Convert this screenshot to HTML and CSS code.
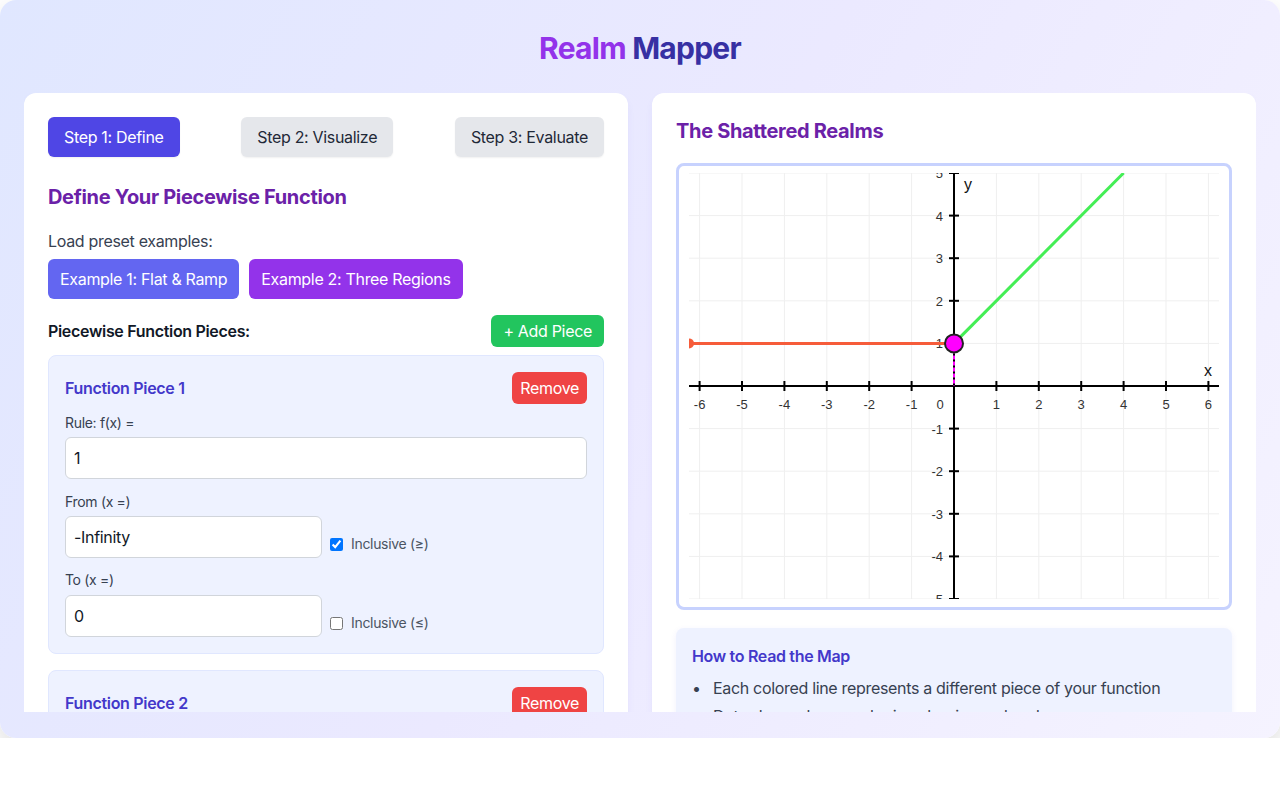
FILE: index.html
```html
<!DOCTYPE html>
<html lang="en">
<head>
    <meta charset="UTF-8">
    <meta name="viewport" content="width=device-width, initial-scale=1.0">
    <title>Realm Mapper</title>
    <link rel="stylesheet" href="styles.css">
</head>
<body>
    <div class="app-frame">
        <h1 class="title"><span class="title-realm">Realm</span> <span class="title-mapper">Mapper</span></h1>
        <div class="panels">
            <section class="card">
                <div class="steps">
                    <button class="step active">Step 1: Define</button>
                    <button class="step">Step 2: Visualize</button>
                    <button class="step">Step 3: Evaluate</button>
                </div>
                <h2 class="card-title">Define Your Piecewise Function</h2>
                <p class="hint">Load preset examples:</p>
                <div class="presets">
                    <button class="btn btn-indigo">Example 1: Flat &amp; Ramp</button>
                    <button class="btn btn-purple">Example 2: Three Regions</button>
                </div>
                <div class="pieces-header">
                    <h3>Piecewise Function Pieces:</h3>
                    <button class="btn btn-green btn-small">+ Add Piece</button>
                </div>
                <div class="piece">
                    <div class="piece-head">
                        <h4>Function Piece 1</h4>
                        <button class="btn btn-red btn-small">Remove</button>
                    </div>
                    <label class="field-label">Rule: f(x) =</label>
                    <input class="field" type="text" value="1">
                    <label class="field-label">From (x =)</label>
                    <div class="bound">
                        <input class="field" type="text" value="-Infinity">
                        <label class="inclusive"><input type="checkbox" checked> Inclusive (&ge;)</label>
                    </div>
                    <label class="field-label">To (x =)</label>
                    <div class="bound">
                        <input class="field" type="text" value="0">
                        <label class="inclusive"><input type="checkbox"> Inclusive (&le;)</label>
                    </div>
                </div>
                <div class="piece">
                    <div class="piece-head">
                        <h4>Function Piece 2</h4>
                        <button class="btn btn-red btn-small">Remove</button>
                    </div>
                    <label class="field-label">Rule: f(x) =</label>
                    <input class="field" type="text" value="x + 1">
                    <label class="field-label">From (x =)</label>
                    <div class="bound">
                        <input class="field" type="text" value="0">
                        <label class="inclusive"><input type="checkbox"> Inclusive (&ge;)</label>
                    </div>
                    <label class="field-label">To (x =)</label>
                    <div class="bound">
                        <input class="field" type="text" value="Infinity">
                        <label class="inclusive"><input type="checkbox"> Inclusive (&le;)</label>
                    </div>
                </div>
            </section>

            <section class="card">
                <h2 class="card-title">The Shattered Realms</h2>
                <div class="graph-box">
                    <svg id="realm-graph" width="530" height="426"></svg>
                </div>
                <div class="legend">
                    <h4>How to Read the Map</h4>
                    <ul>
                        <li>Each colored line represents a different piece of your function</li>
                        <li>Dots show where each piece begins and ends</li>
                        <li>Filled dots are included, hollow dots are not</li>
                    </ul>
                </div>
            </section>
        </div>
    </div>

    <script>
        const svg = document.getElementById("realm-graph")
        const NS = "http://www.w3.org/2000/svg"

        // origin sits in the middle, 42.4px per unit on x, 42.6px on y
        const OX = 265, OY = 213, UX = 42.4, UY = 42.6
        const W = 530, H = 426

        function px(x) { return OX + x * UX }
        function py(y) { return OY - y * UY }

        function add(tag, attrs, text) {
            const el = document.createElementNS(NS, tag)
            for (const k in attrs) el.setAttribute(k, attrs[k])
            if (text !== undefined) el.textContent = text
            svg.appendChild(el)
            return el
        }

        // grid
        for (let i = -6; i <= 6; i++) {
            add("line", { x1: px(i), y1: 0, x2: px(i), y2: H, class: "grid" })
        }
        for (let j = -5; j <= 5; j++) {
            add("line", { x1: 0, y1: py(j), x2: W, y2: py(j), class: "grid" })
        }

        // axes
        add("line", { x1: 0, y1: OY, x2: W, y2: OY, class: "axis" })
        add("line", { x1: OX, y1: 0, x2: OX, y2: H, class: "axis" })

        for (let i = -6; i <= 6; i++) {
            if (i == 0) continue
            add("line", { x1: px(i), y1: OY - 5, x2: px(i), y2: OY + 5, class: "axis" })
            add("text", { x: px(i), y: OY + 23, class: "tick", "text-anchor": "middle" }, i)
        }
        for (let j = -5; j <= 5; j++) {
            if (j == 0) continue
            add("line", { x1: OX - 5, y1: py(j), x2: OX + 5, y2: py(j), class: "axis" })
            add("text", { x: OX - 11, y: py(j) + 5, class: "tick", "text-anchor": "end" }, j)
        }
        add("text", { x: OX - 14, y: OY + 23, class: "tick", "text-anchor": "middle" }, "0")
        add("text", { x: W - 11, y: OY - 10, class: "axis-name", "text-anchor": "middle" }, "x")
        add("text", { x: OX + 14, y: 17, class: "axis-name", "text-anchor": "middle" }, "y")

        // piece 1: f(x) = 1 on (-inf, 0)
        add("line", { x1: 0, y1: py(1), x2: px(0), y2: py(1), stroke: "#f65c3a", class: "piece-line" })
        add("circle", { cx: 0, cy: py(1), r: 5, fill: "#f65c3a" })

        // piece 2: f(x) = x + 1 on (0, inf)
        add("line", { x1: px(0), y1: py(1), x2: px(4), y2: py(5), stroke: "#44ee55", class: "piece-line" })

        // boundary marker at x = 0
        add("line", { x1: px(0), y1: py(1), x2: px(0), y2: py(0), class: "boundary" })
        add("circle", { cx: px(0), cy: py(1), r: 9, class: "boundary-dot" })
    </script>
</body>
</html>
```

FILE: styles.css
```css
* {
    box-sizing: border-box;
}
body {
    margin: 0;
    background-color: #ffffff;
    font-family: Inter, "Noto Sans", sans-serif;
    letter-spacing: -0.02em;
    color: #111827;
}
.app-frame {
    height: 738px;
    display: flex;
    flex-direction: column;
    padding: 30px 24px 26px;
    border-radius: 16px;
    background: linear-gradient(120deg, #e0e7ff 0%, #ebe9ff 50%, #f5f3ff 100%);
    box-shadow: 0 12px 30px rgba(0, 0, 0, 0.14);
}
.title {
    margin: 0 0 27px;
    text-align: center;
    font-size: 30px;
    line-height: 36px;
    font-weight: 700;
    letter-spacing: -0.025em;
}
.title-realm {
    color: #9333ea;
}
.title-mapper {
    color: #3730a3;
}
.panels {
    flex: 1;
    min-height: 0;
    overflow: hidden;
    display: grid;
    grid-template-columns: 1fr 1fr;
    gap: 24px;
    align-items: start;
}
.card {
    background-color: #ffffff;
    border-radius: 12px;
    padding: 24px;
    box-shadow: 0 4px 10px -2px rgba(79, 70, 229, 0.08);
}

/* step tabs */
.steps {
    display: flex;
    justify-content: space-between;
    margin-bottom: 26px;
}
.step {
    font-family: inherit;
    letter-spacing: inherit;
    font-size: 16px;
    line-height: 24px;
    padding: 8px 16px;
    border: none;
    border-radius: 6px;
    background-color: #e5e7eb;
    color: #1f2937;
    box-shadow: 0 1px 2px rgba(0, 0, 0, 0.06);
}
.step.active {
    background-color: #4f46e5;
    color: #ffffff;
}

.card-title {
    margin: 0 0 18px;
    font-size: 20px;
    line-height: 28px;
    font-weight: 700;
    color: #6b21a8;
}
.hint {
    margin: 0 0 6px;
    font-size: 16px;
    line-height: 24px;
    color: #374151;
}

.btn {
    font-family: inherit;
    letter-spacing: inherit;
    font-size: 16px;
    line-height: 24px;
    padding: 8px 12px;
    border: none;
    border-radius: 6px;
    color: #ffffff;
}
.btn-small {
    padding: 4px 12px;
}
.btn-indigo { background-color: #6366f1; }
.btn-purple { background-color: #9333ea; }
.btn-green { background-color: #22c55e; }
.btn-red { background-color: #ef4444; padding: 4px 8px; }

.presets {
    display: flex;
    gap: 10px;
    margin-bottom: 16px;
}
.pieces-header {
    display: flex;
    justify-content: space-between;
    align-items: center;
    margin-bottom: 8px;
}
.pieces-header h3 {
    margin: 0;
    font-size: 16px;
    font-weight: 600;
    color: #111827;
}

/* one card per function piece */
.piece {
    background-color: #eef2ff;
    border: 1px solid #e0e7ff;
    border-radius: 8px;
    padding: 16px;
    margin-bottom: 16px;
}
.piece-head {
    display: flex;
    justify-content: space-between;
    align-items: center;
    margin-bottom: 9px;
}
.piece-head h4 {
    margin: 0;
    font-size: 16px;
    font-weight: 600;
    color: #4338ca;
}
.field-label {
    display: block;
    font-size: 14px;
    line-height: 20px;
    color: #374151;
    margin-bottom: 4px;
}
.field {
    display: block;
    width: 100%;
    padding: 8px;
    border: 1px solid #d1d5db;
    border-radius: 6px;
    font-family: inherit;
    letter-spacing: inherit;
    font-size: 16px;
    line-height: 24px;
    color: #111827;
    background-color: #ffffff;
    margin-bottom: 13px;
}
.bound {
    display: flex;
    align-items: flex-end;
    gap: 8px;
    margin-bottom: 12px;
}
.bound + .field-label {
    margin-bottom: 5px;
}
.bound:last-child {
    margin-bottom: 0;
}
.bound .field {
    width: 257px;
    margin-bottom: 0;
}
.inclusive {
    display: flex;
    align-items: center;
    gap: 8px;
    font-size: 14px;
    line-height: 20px;
    color: #4b5563;
    padding-bottom: 4px;
}
.inclusive input {
    margin: 0;
    width: 13px;
    height: 13px;
}

/* graph */
.graph-box {
    border: 3px solid #c7d2fe;
    border-radius: 8px;
    padding: 7px 10px 8px;
    background-color: #ffffff;
    margin-top: 1px;
    margin-bottom: 18px;
}
#realm-graph {
    display: block;
    letter-spacing: 0;
}
#realm-graph .grid {
    stroke: #efefef;
    stroke-width: 1;
}
#realm-graph .axis {
    stroke: #000000;
    stroke-width: 2;
}
#realm-graph .tick {
    font-family: "Liberation Sans", Arial, sans-serif;
    font-size: 13px;
    fill: #333333;
}
#realm-graph .axis-name {
    font-family: "Liberation Sans", Arial, sans-serif;
    font-size: 16px;
    fill: #111111;
}
#realm-graph .piece-line {
    stroke-width: 3;
}
#realm-graph .boundary {
    stroke: #ff00ff;
    stroke-width: 2;
    stroke-dasharray: 4 2;
}
#realm-graph .boundary-dot {
    fill: #ff00ff;
    stroke: #222222;
    stroke-width: 2;
}

.legend {
    background-color: #eef2ff;
    border-radius: 8px;
    padding: 16px;
    box-shadow: 0 2px 6px rgba(79, 70, 229, 0.08);
}
.legend h4 {
    margin: 0 0 8px;
    font-size: 16px;
    line-height: 24px;
    font-weight: 600;
    color: #4338ca;
}
.legend ul {
    margin: 0;
    padding-left: 21px;
    list-style: none;
    font-size: 16px;
    line-height: 24px;
    color: #374151;
}
.legend li {
    margin-bottom: 4px;
}
.legend li::before {
    content: "•";
    display: inline-block;
    width: 21px;
    margin-left: -21px;
}
```
